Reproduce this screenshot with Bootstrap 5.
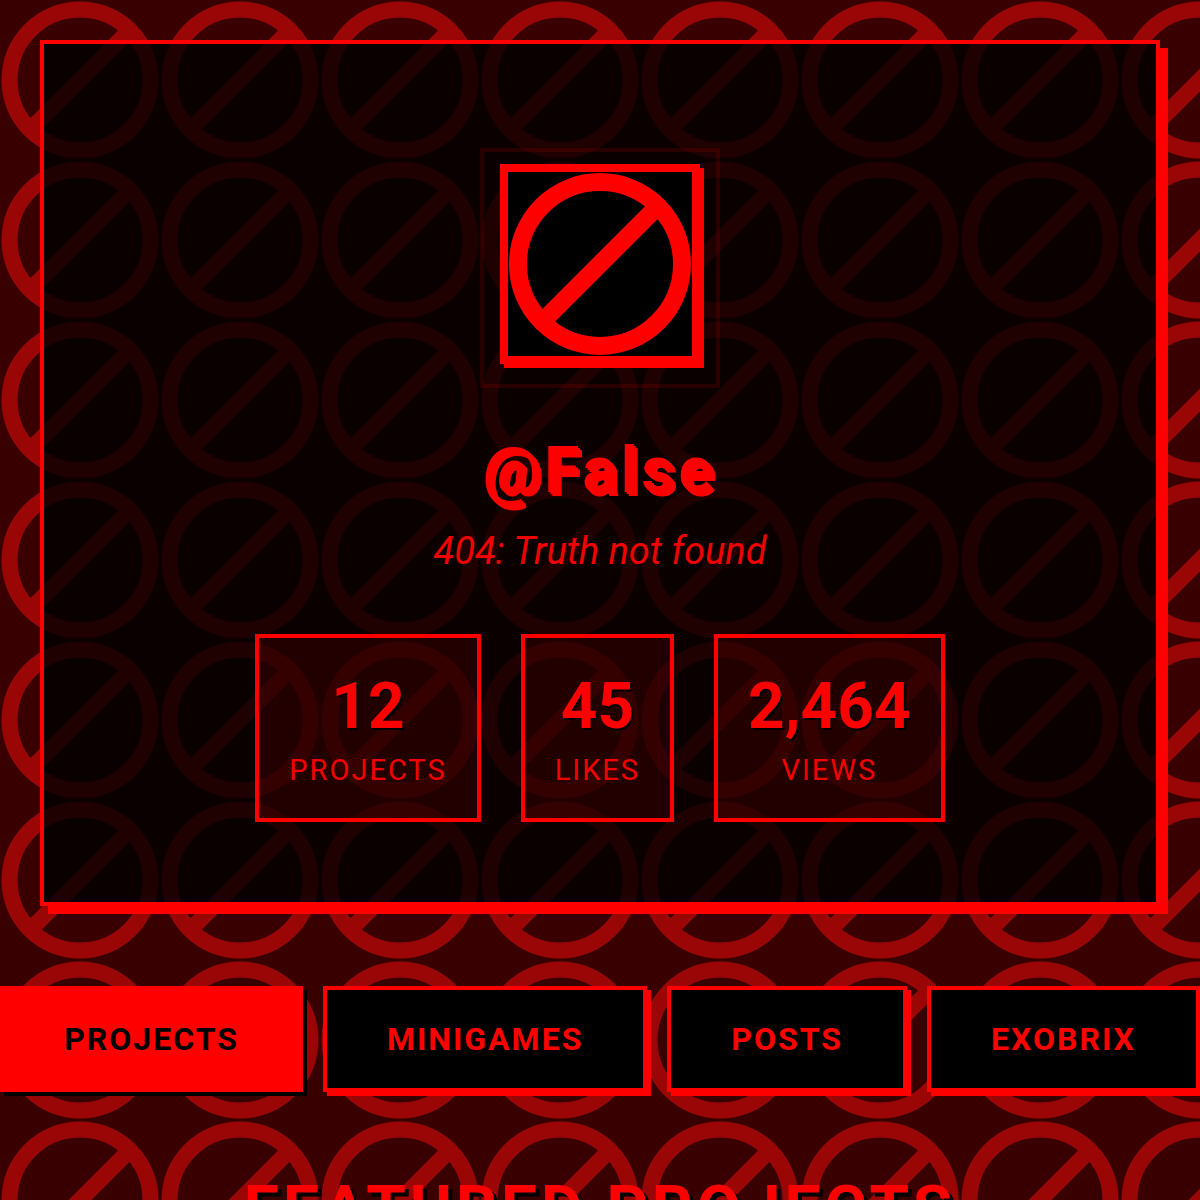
<!DOCTYPE html>
<html lang="en">
<head>
<meta charset="utf-8">
<meta name="viewport" content="width=device-width, initial-scale=1">
<title>@False</title>
<link href="https://cdn.jsdelivr.net/npm/bootstrap@5.3.0/dist/css/bootstrap.min.css" rel="stylesheet">
<style>
  body {
    height: 100vh;
    overflow: hidden;
    color: #f00;
    font-family: Roboto, "Liberation Sans", sans-serif;
    background-color: #380000;
    background-image: url("data:image/svg+xml,%3Csvg xmlns='http://www.w3.org/2000/svg' width='160' height='160' viewBox='0 0 160 160'%3E%3Cg fill='none' stroke='%239a0606' stroke-width='16'%3E%3Ccircle cx='80' cy='80' r='70.5'/%3E%3Cpath d='M32 128L128 32'/%3E%3C/g%3E%3C/svg%3E");
    background-size: 160px 160px;
  }
  .profile {
    margin: 40px;
    padding: 120px 80px 80px;
    background: rgba(0, 0, 0, .8);
    border: 4px solid #f00;
    box-shadow: 8px 8px 0 #f00;
  }
  .avatar {
    width: 200px;
    height: 200px;
    background: #000;
    border: 8px solid #f00;
    box-shadow: 4px 4px 0 #f00;
  }
  .avatar::before {
    content: "";
    position: absolute;
    inset: -24px -28px -32px;
    border: 4px solid rgba(255, 0, 0, .12);
  }
  .handle {
    margin: 69px 0 19px;
    font-size: 64px;
    line-height: 76px;
    font-weight: 700;
    letter-spacing: 4px;
    text-shadow: 2px 2px 0 #f00, 4px 4px 0 #f00;
  }
  .tagline { margin-bottom: 60px; font-size: 38px; line-height: 46px; opacity: .95; }
  .stats { gap: 40px; }
  .stat { padding: 30px; border: 4px solid #f00; background: rgba(255, 0, 0, .1); }
  .stat-value { font-size: 64px; line-height: 78px; text-shadow: 2px 2px 0 #000; }
  .stat-label { margin-top: 7px; margin-bottom: 1px; font-size: 29px; line-height: 34px; letter-spacing: 2px; opacity: .95; }
  .tabs { gap: 20px; margin-top: 80px; }
  .tabs .btn {
    padding: 30px 60px;
    border: 4px solid #f00;
    border-radius: 0;
    background: #000;
    color: #f00;
    font-size: 32px;
    line-height: 38px;
    letter-spacing: 2px;
    box-shadow: 4px 4px 0 #f00;
  }
  .tabs .btn.active { background: #f00; color: #000; border-color: #f00; box-shadow: 4px 4px 0 #000; }
  .section-title {
    margin: 80px 0 0;
    font-size: 64px;
    line-height: 76px;
    letter-spacing: 4px;
    text-shadow: 4px 4px 0 #000;
  }
</style>
</head>
<body>
<header class="profile d-flex flex-column align-items-center text-center">
  <div class="avatar position-relative">
    <svg class="d-block w-100 h-100" viewBox="0 0 184 184" role="img" aria-label="Avatar">
      <g fill="none" stroke="#f00" stroke-width="18"><circle cx="92" cy="92" r="82"/><path d="M36 148L148 36"/></g>
    </svg>
  </div>
  <h1 class="handle">@False</h1>
  <p class="tagline fst-italic">404: Truth not found</p>
  <div class="stats d-flex justify-content-center">
    <div class="stat"><div class="stat-value fw-bold">12</div><div class="stat-label text-uppercase">Projects</div></div>
    <div class="stat"><div class="stat-value fw-bold">45</div><div class="stat-label text-uppercase">Likes</div></div>
    <div class="stat"><div class="stat-value fw-bold">2,464</div><div class="stat-label text-uppercase">Views</div></div>
  </div>
</header>
<nav class="tabs d-flex justify-content-center" aria-label="Sections">
  <button type="button" class="btn flex-shrink-0 fw-bold text-uppercase active">Projects</button>
  <button type="button" class="btn flex-shrink-0 fw-bold text-uppercase">Minigames</button>
  <button type="button" class="btn flex-shrink-0 fw-bold text-uppercase">Posts</button>
  <button type="button" class="btn flex-shrink-0 fw-bold text-uppercase">Exobrix</button>
</nav>
<main>
  <h2 class="section-title fw-bold text-center text-uppercase">Featured Projects</h2>
</main>
<script src="https://cdn.jsdelivr.net/npm/bootstrap@5.3.0/dist/js/bootstrap.bundle.min.js"></script>
</body>
</html>
